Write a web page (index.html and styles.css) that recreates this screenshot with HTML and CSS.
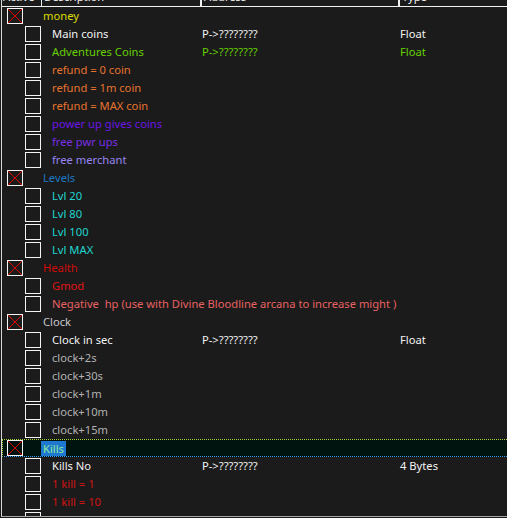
FILE: index.html
```html
<!DOCTYPE html>
<html>
<head>
<meta charset="utf-8">
<link rel="stylesheet" href="styles.css">
</head>
<body>
<div class="view">
  <div class="header">
    <div class="hcell c-active"><span>Active</span></div>
    <div class="hcell c-desc"><span>Description</span></div>
    <div class="hcell c-addr"><span>Address</span></div>
    <div class="hcell c-type"><span>Type</span></div>
  </div>
  <div class="rows">
    <div class="row group"><div class="tree"><span class="cb x"><svg viewBox="0 0 14 14"><path d="M0 0L14 14M14 0L0 14"/></svg></span><span class="txt money">money</span></div></div>
    <div class="row"><div class="tree"><span class="cb"></span><span class="txt white">Main coins</span></div><div class="addr white">P-&gt;????????</div><div class="type white">Float</div></div>
    <div class="row"><div class="tree"><span class="cb"></span><span class="txt lime">Adventures Coins</span></div><div class="addr lime">P-&gt;????????</div><div class="type lime">Float</div></div>
    <div class="row"><div class="tree"><span class="cb"></span><span class="txt orange">refund = 0 coin</span></div></div>
    <div class="row"><div class="tree"><span class="cb"></span><span class="txt orange">refund = 1m coin</span></div></div>
    <div class="row"><div class="tree"><span class="cb"></span><span class="txt orange">refund = MAX coin</span></div></div>
    <div class="row"><div class="tree"><span class="cb"></span><span class="txt purple">power up gives coins</span></div></div>
    <div class="row"><div class="tree"><span class="cb"></span><span class="txt purple2">free pwr ups</span></div></div>
    <div class="row"><div class="tree"><span class="cb"></span><span class="txt lavender">free merchant</span></div></div>
    <div class="row group"><div class="tree"><span class="cb x"><svg viewBox="0 0 14 14"><path d="M0 0L14 14M14 0L0 14"/></svg></span><span class="txt blue">Levels</span></div></div>
    <div class="row"><div class="tree"><span class="cb"></span><span class="txt teal">Lvl 20</span></div></div>
    <div class="row"><div class="tree"><span class="cb"></span><span class="txt teal">Lvl 80</span></div></div>
    <div class="row"><div class="tree"><span class="cb"></span><span class="txt teal">Lvl 100</span></div></div>
    <div class="row"><div class="tree"><span class="cb"></span><span class="txt teal">Lvl MAX</span></div></div>
    <div class="row group"><div class="tree"><span class="cb x"><svg viewBox="0 0 14 14"><path d="M0 0L14 14M14 0L0 14"/></svg></span><span class="txt red">Health</span></div></div>
    <div class="row"><div class="tree"><span class="cb"></span><span class="txt red2">Gmod</span></div></div>
    <div class="row"><div class="tree wide"><span class="cb"></span><span class="txt salmon">Negative&nbsp; hp (use with Divine Bloodline arcana to increase might )</span></div></div>
    <div class="row group"><div class="tree"><span class="cb x"><svg viewBox="0 0 14 14"><path d="M0 0L14 14M14 0L0 14"/></svg></span><span class="txt light">Clock</span></div></div>
    <div class="row"><div class="tree"><span class="cb"></span><span class="txt white">Clock in sec</span></div><div class="addr white">P-&gt;????????</div><div class="type white">Float</div></div>
    <div class="row"><div class="tree"><span class="cb"></span><span class="txt grey">clock+2s</span></div></div>
    <div class="row"><div class="tree"><span class="cb"></span><span class="txt grey">clock+30s</span></div></div>
    <div class="row"><div class="tree"><span class="cb"></span><span class="txt grey">clock+1m</span></div></div>
    <div class="row"><div class="tree"><span class="cb"></span><span class="txt grey">clock+10m</span></div></div>
    <div class="row"><div class="tree"><span class="cb"></span><span class="txt grey">clock+15m</span></div></div>
    <div class="row group selected"><div class="tree"><span class="cb x"><svg viewBox="0 0 14 14"><path d="M0 0L14 14M14 0L0 14"/></svg></span><span class="txt sel">Kills</span></div></div>
    <div class="row"><div class="tree"><span class="cb"></span><span class="txt white">Kills No</span></div><div class="addr white">P-&gt;????????</div><div class="type white">4 Bytes</div></div>
    <div class="row"><div class="tree"><span class="cb"></span><span class="txt dred">1 kill = 1</span></div></div>
    <div class="row"><div class="tree"><span class="cb"></span><span class="txt dred">1 kill = 10</span></div></div>
    <div class="row"><div class="tree"><span class="cb"></span><span class="txt dred">1 kill = 100</span></div></div>
  </div>
</div>
</body>
</html>
```

FILE: styles.css
```css
html, body {
  margin: 0;
  padding: 0;
  background: #1b1b1b;
}

body {
  width: 507px;
  height: 518px;
  overflow: hidden;
  font-family: "Noto Sans", "Open Sans", sans-serif;
  font-size: 11.2px;
  color: #f0f0f0;
}

.view {
  margin-left: 1px;
  height: 516px;
  border-left: 1px solid #d8d8d8;
  border-bottom: 1px solid #a8a8a8;
  overflow: hidden;
  display: flex;
  flex-direction: column;
}

.header {
  display: flex;
  height: 6px;
  border-bottom: 1px solid #f0f0f0;
  overflow: hidden;
  flex: none;
}

.hcell {
  height: 6px;
  overflow: hidden;
  border-right: 1px solid #f0f0f0;
  box-sizing: border-box;
}

.hcell span {
  display: block;
  line-height: 18px;
  margin-top: -12px;
  padding-left: 2px;
  white-space: nowrap;
}

.c-active { width: 40px; }
.c-active span { padding-left: 1px; }
.c-desc { width: 160px; border-right-width: 2px; }
.c-addr { width: 198px; border-right-width: 2px; }
.c-type { flex: 1; border-right: none; }

.rows {
  flex: 1;
  overflow: hidden;
}

.row {
  display: flex;
  align-items: center;
  height: 18px;
  white-space: nowrap;
}

.tree {
  width: 200px;
  flex: none;
  display: flex;
  align-items: center;
  padding-left: 23px;
  box-sizing: border-box;
}

.tree.wide {
  width: auto;
}

.group .tree {
  padding-left: 5px;
}

.cb {
  width: 16px;
  height: 16px;
  box-sizing: border-box;
  border: 1px solid #f4f4f4;
  flex: none;
  display: block;
}

.cb svg {
  display: block;
  width: 14px;
  height: 14px;
}

.cb svg path {
  stroke: #e00000;
  stroke-width: 1;
  fill: none;
}

.txt {
  margin-left: 11px;
  line-height: 18px;
}

.group .txt {
  margin-left: 20px;
}

.addr {
  width: 198px;
  flex: none;
  line-height: 18px;
}

.type {
  line-height: 18px;
}

.selected {
  background: #00140f;
  box-sizing: border-box;
  border: 1px dotted #b4d83c;
  border-bottom-color: #3c9cf0;
  border-right: none;
}

.selected .tree {
  padding-left: 4px;
}

.selected .txt {
  margin-left: 18px;
  background: #1e78d0;
  color: #8ee89a;
  padding: 0 2px;
  line-height: 15px;
}

.white { color: #f2f2f2; }
.money { color: #dcdc00; }
.lime { color: #66d000; }
.orange { color: #e8732e; }
.purple { color: #6c14e6; }
.purple2 { color: #7a2ee8; }
.lavender { color: #9686f2; }
.blue { color: #1c78c4; }
.teal { color: #1ed6d0; }
.red { color: #d20a0a; }
.red2 { color: #e21414; }
.salmon { color: #e86262; }
.light { color: #c8c8cc; }
.grey { color: #b2b2b2; }
.dred { color: #d01414; }
```
